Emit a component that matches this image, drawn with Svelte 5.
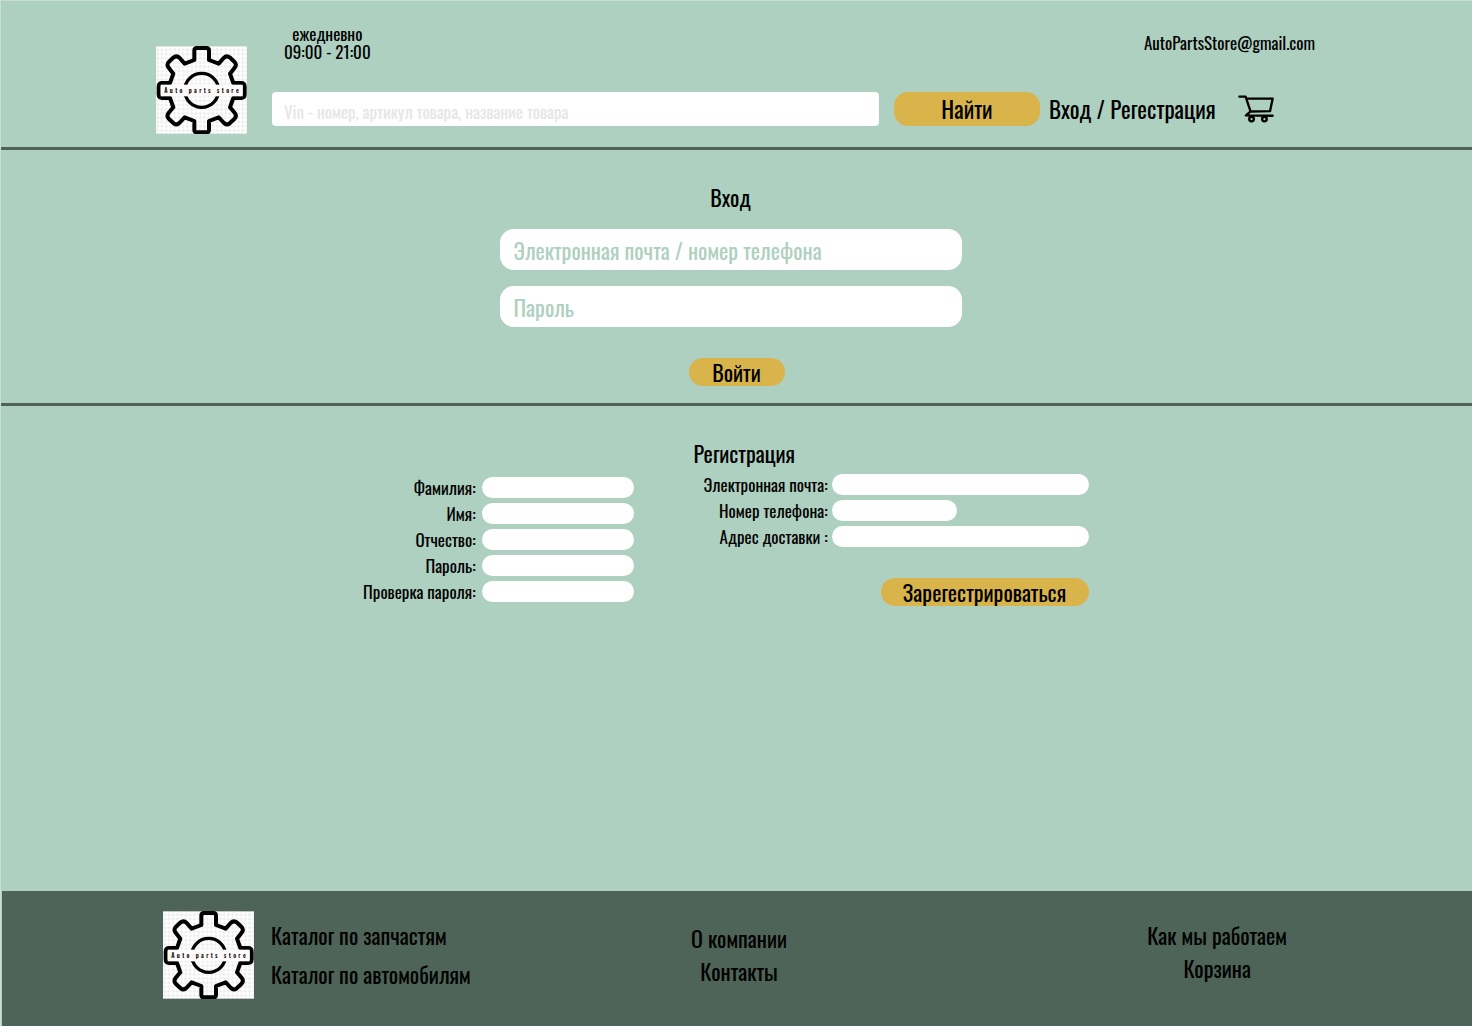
<script>
  const personal = [
    { id: 'surname', label: 'Фамилия:', type: 'text' },
    { id: 'name', label: 'Имя:', type: 'text' },
    { id: 'patronymic', label: 'Отчество:', type: 'text' },
    { id: 'password', label: 'Пароль:', type: 'password' },
    { id: 'confirm', label: 'Проверка пароля:', type: 'password' }
  ];
  const contacts = [
    { id: 'email', label: 'Электронная почта:', type: 'email' },
    { id: 'phone', label: 'Номер телефона:', type: 'tel', short: true },
    { id: 'address', label: 'Адрес доставки :', type: 'text' }
  ];
</script>

{#snippet logo(id)}
  <svg class="logo" viewBox="33 34 273 262" role="img" aria-label="Auto parts store">
    <defs>
      <pattern id={id} width="18" height="18" patternUnits="userSpaceOnUse" patternTransform="rotate(45)">
        <rect width="18" height="18" fill="#fff" />
        <rect width="9" height="9" fill="#f0f0f0" />
        <rect x="9" y="9" width="9" height="9" fill="#f0f0f0" />
      </pattern>
    </defs>
    <rect x="33" y="34" width="273" height="262" fill="url(#{id})" />
    <path
      d="M148 75V47Q148 39 156 39H184Q192 39 192 47V75L221 86L236 69Q245 60 254 67L268 80Q276 88 270 97L255 116L265 144H288Q299 144 299 155V178Q299 189 288 189H265L255 217L270 235Q276 244 268 252L254 265Q245 272 237 264L221 247L192 258V284Q192 292 184 292H156Q148 292 148 284V258L119 247L103 264Q95 272 86 265L72 252Q64 244 70 235L85 217L75 189H52Q41 189 41 178V155Q41 144 52 144H75L85 116L70 97Q64 88 72 80L86 67Q95 60 104 69L119 86Z"
      fill="none" stroke="#000" stroke-width="12" stroke-linejoin="round" />
    <circle cx="170" cy="166" r="51" fill="none" stroke="#000" stroke-width="10" />
    <rect x="47" y="149" width="246" height="35" fill="#fffbfb" />
    <text x="173" y="173" text-anchor="middle" class="logo-text">Auto parts store</text>
  </svg>
{/snippet}

<div class="page">
  <header>
    {@render logo('tiles-top')}
    <div class="head">
      <div class="info">
        <p class="hours">ежедневно<br />09:00 - 21:00</p>
        <a href="mailto:AutoPartsStore@gmail.com">AutoPartsStore@gmail.com</a>
      </div>
      <form class="tools">
        <input class="search" type="search" aria-label="Поиск" placeholder="Vin - номер, артикул товара, название товара" />
        <button class="find" type="button">Найти</button>
        <a class="account" href="#login">Вход / Регестрация</a>
        <a class="cart" href="#cart" aria-label="Корзина">
          <svg viewBox="1133 257 109 83" fill="none" stroke="#000" stroke-width="7" stroke-linecap="round" stroke-linejoin="round">
            <path d="M1137 261H1156L1171 306L1230 305L1238 267H1158M1171 306L1157 318L1238 319" />
            <circle cx="1174" cy="329" r="7" />
            <circle cx="1213" cy="329" r="7" />
          </svg>
        </a>
      </form>
    </div>
  </header>

  <section class="login" id="login">
    <form>
      <div class="login-fields">
        <h2>Вход</h2>
        <input type="text" aria-label="Электронная почта / номер телефона" placeholder="Электронная почта / номер телефона" />
        <input type="password" aria-label="Пароль" placeholder="Пароль" />
      </div>
      <button type="button">Войти</button>
    </form>
  </section>

  <section class="signup">
    <form>
      <div class="fields personal">
        {#each personal as f}
          <label for={f.id}>{f.label}</label>
          <input id={f.id} type={f.type} />
        {/each}
      </div>
      <div class="right">
        <h2>Регистрация</h2>
        <div class="fields contacts">
          {#each contacts as f}
            <label for={f.id}>{f.label}</label>
            <input id={f.id} type={f.type} class:short={f.short} />
          {/each}
        </div>
        <button type="button">Зарегестрироваться</button>
      </div>
    </form>
  </section>

  <footer>
    <div class="brand">
      {@render logo('tiles-bottom')}
      <nav class="catalog">
        <a href="#parts">Каталог по запчастям</a>
        <a href="#cars">Каталог по автомобилям</a>
      </nav>
    </div>
    <nav class="about">
      <a href="#about">О компании</a>
      <a href="#contacts">Контакты</a>
    </nav>
    <nav class="help">
      <a href="#how">Как мы работаем</a>
      <a href="#cart">Корзина</a>
    </nav>
  </footer>
</div>

<style>
  :global(body) {
    background: #aed0c0;
  }
  .page {
    box-sizing: border-box;
    min-height: 100vh;
    display: flex;
    flex-direction: column;
    border-left: 1px solid #c9dfd4;
    border-top: 1px solid #c9dfd4;
    font-family: Oswald, 'Liberation Sans Narrow', 'Liberation Sans', sans-serif;
    font-size: 17px;
    line-height: 18px;
    color: #000;
  }
  input,
  button {
    box-sizing: border-box;
    border: 0;
    margin: 0;
    padding: 0;
    font: inherit;
    color: inherit;
    background: #fff;
    min-width: 0;
  }
  button {
    background: #d8b44b;
    font-size: 22px;
    line-height: 28px;
    height: 28px;
    border-radius: 14px;
    cursor: pointer;
  }
  a {
    color: inherit;
    text-decoration: none;
    white-space: nowrap;
  }
  h2,
  p {
    margin: 0;
    font-weight: 400;
  }
  h2 {
    font-size: 22px;
    line-height: 32px;
  }
  .logo {
    display: block;
    flex: none;
    width: 91px;
    height: 88px;
  }
  .logo-text {
    font-size: 19px;
    font-weight: 500;
    letter-spacing: 7px;
  }

  header {
    display: flex;
    gap: 25px;
    align-items: flex-end;
    padding: 24px 157px 13px 155px;
    border-bottom: 3px solid #4e6458;
  }
  .head {
    flex: 1;
    min-width: 0;
    display: flex;
    flex-direction: column;
    gap: 31px;
    padding-bottom: 8px;
  }
  .info {
    display: flex;
    justify-content: space-between;
    align-items: center;
    padding-left: 12px;
  }
  .hours {
    text-align: center;
  }
  .tools {
    display: flex;
    align-items: center;
    padding-right: 41px;
  }
  .search {
    flex: 1;
    height: 34px;
    padding: 4px 12px 0;
    border-radius: 4px;
    appearance: none;
  }
  .search::placeholder {
    color: #e6e6e6;
    opacity: 1;
  }
  .find {
    width: 146px;
    height: 34px;
    margin: 0 9px 0 15px;
    font-size: 23px;
  }
  .account {
    min-width: 172px;
    font-size: 23px;
    line-height: 34px;
  }
  .cart {
    width: 36px;
    margin-left: 17px;
  }
  .cart svg {
    display: block;
    width: 36px;
    height: 28px;
  }

  .login {
    padding: 31px 0 17px;
    border-bottom: 3px solid #4e6458;
  }
  .login form {
    display: flex;
    flex-direction: column;
    align-items: center;
    gap: 31px;
  }
  .login-fields {
    display: flex;
    flex-direction: column;
    gap: 16px;
    width: 462px;
    padding-right: 12px;
    text-align: center;
  }
  .login-fields input {
    height: 41px;
    padding: 0 14px;
    border-radius: 14px;
    font-size: 22px;
  }
  .login-fields input::placeholder {
    color: #aed0c0;
    opacity: 1;
  }
  .login button {
    width: 96px;
  }

  .signup {
    flex: 1;
    padding: 31px 30px 34px 0;
  }
  .signup form {
    display: flex;
    justify-content: center;
    gap: 60px;
  }
  .fields {
    display: grid;
    grid-auto-rows: 21px;
    row-gap: 5px;
    align-items: center;
  }
  .fields label {
    text-align: right;
    white-space: nowrap;
  }
  .fields input {
    height: 21px;
    padding: 0 10px;
    border-radius: 11px;
  }
  .personal {
    grid-template-columns: 121px 152px;
    column-gap: 6px;
    padding-top: 40px;
  }
  .right {
    display: flex;
    flex-direction: column;
  }
  .contacts {
    grid-template-columns: 134px 257px;
    column-gap: 4px;
    padding-top: 5px;
  }
  .contacts .short {
    width: 125px;
  }
  .right button {
    width: 208px;
    margin-top: 31px;
    align-self: flex-end;
  }

  footer {
    display: grid;
    grid-template-columns: 1fr auto 1fr;
    align-items: start;
    margin-left: 1px;
    padding: 20px 157px 27px 161px;
    background: #4e6458;
    font-size: 22px;
    line-height: 33px;
  }
  .brand {
    display: flex;
    gap: 17px;
  }
  nav {
    display: flex;
    flex-direction: column;
    align-items: center;
    padding-top: 11px;
  }
  .catalog {
    align-items: flex-start;
    gap: 6px;
    padding-top: 8px;
  }
  .help {
    justify-self: end;
    padding: 8px 28px 0 0;
  }
</style>
